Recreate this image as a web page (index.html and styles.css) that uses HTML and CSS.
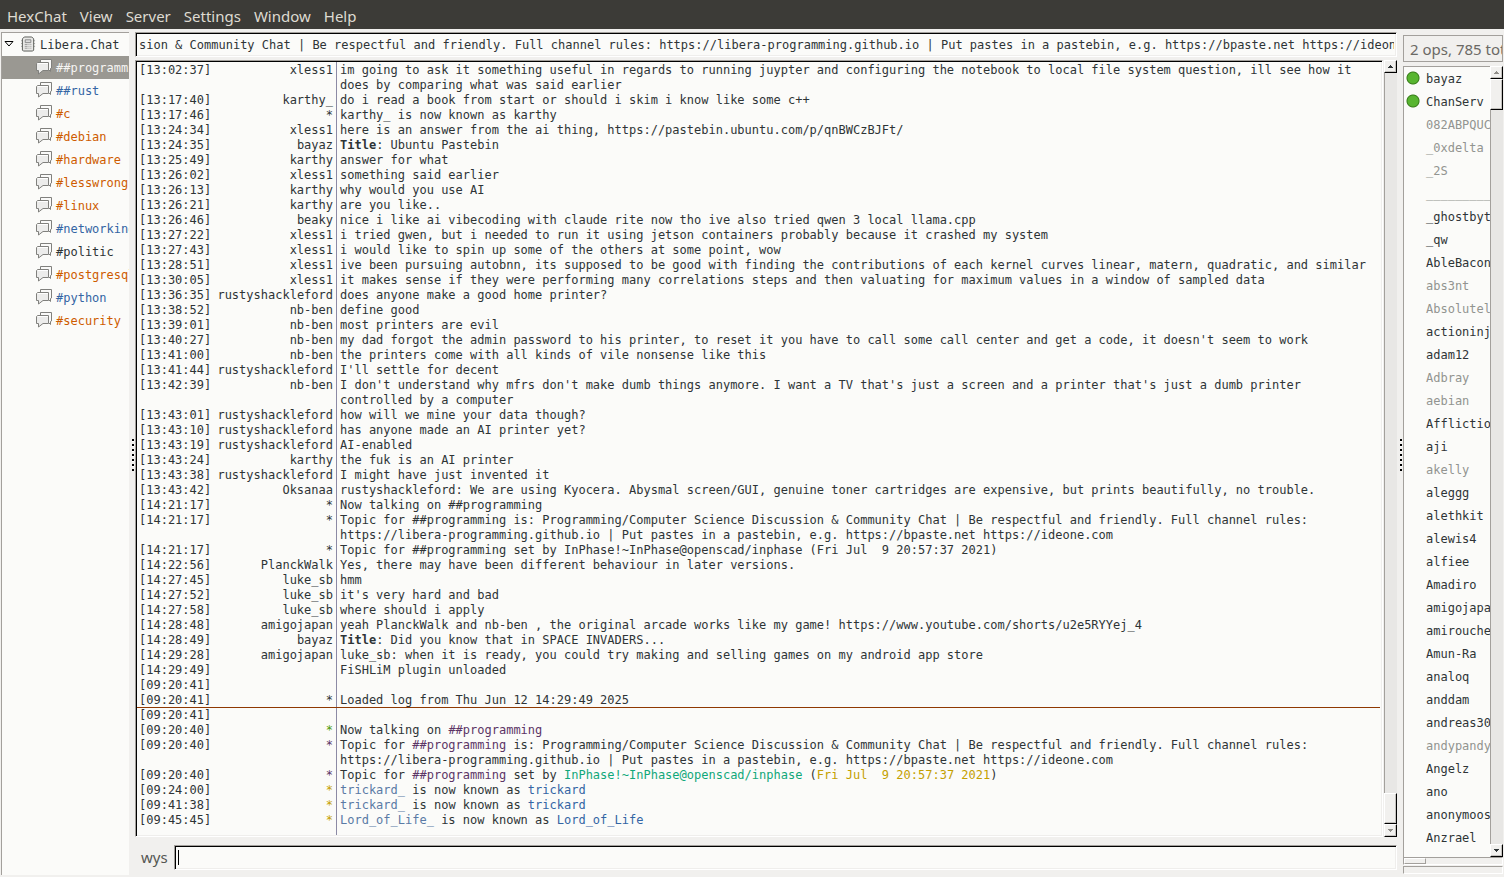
FILE: index.html
```html
<!DOCTYPE html>
<html lang="en">
<head>
<meta charset="utf-8">
<title>HexChat: ##programming</title>
<link rel="stylesheet" href="styles.css">
</head>
<body>
<svg class="defs" aria-hidden="true">
<symbol id="chat" viewBox="0 0 16 16"><path d="M4.500 3.500V.5h11v8.500l-1 .5v3l-2-2H4.500z" fill="#fafaf9" stroke="#80807d"/><path d="M1.500 3.500h11v8H7l-4.500 3.500v-3.500h-2v-7z" fill="#ececeb" stroke="#80807d"/><path d="M2 4.500h10" stroke="#fff"/></symbol>
<symbol id="server" viewBox="0 0 16 16"><path d="M0 4.500h2M0 7.500h2M0 10.500h2M13 4.500h2M13 7.500h2M13 10.500h2" stroke="#aaa"/><path d="M3.500.5h8l2 2v12l-1 1h-10l-1-1v-12z" fill="#e8e8e6" stroke="#555753"/><path d="M4.500 3.500h6v3h-6z" fill="#ddd" stroke="#888"/><path d="M4 8.500h3M4 10.500h3M4 12.500h3M8 8.500h1M10 8.500h1M8 10.500h1M10 10.500h1M8 12.500h1M10 12.500h1" stroke="#999"/></symbol>
<symbol id="up" viewBox="0 0 5 3"><path d="M2 0h1v1h1v1h1v1H0V2h1V1h1z" fill="currentColor"/></symbol>
<symbol id="down" viewBox="0 0 5 3"><path d="M0 0h5v1H4v1H3v1H2V2H1V1H0z" fill="currentColor"/></symbol>
</svg>
<nav class="menubar">
<button>HexChat</button><button>View</button><button>Server</button><button>Settings</button><button>Window</button><button>Help</button>
</nav>
<div class="window">
<aside class="tree">
<button class="row root"><svg class="arrow" viewBox="0 0 10 6"><path d="M1 .5h8L5 5z" fill="none" stroke="#000"/></svg><svg class="icon"><use href="#server"/></svg><span>Libera.Chat</span></button>
<button class="row selected"><svg class="icon"><use href="#chat"/></svg><span>##programming</span></button>
<button class="row talk"><svg class="icon"><use href="#chat"/></svg><span>##rust</span></button>
<button class="row event"><svg class="icon"><use href="#chat"/></svg><span>#c</span></button>
<button class="row event"><svg class="icon"><use href="#chat"/></svg><span>#debian</span></button>
<button class="row event"><svg class="icon"><use href="#chat"/></svg><span>#hardware</span></button>
<button class="row event"><svg class="icon"><use href="#chat"/></svg><span>#lesswrong</span></button>
<button class="row event"><svg class="icon"><use href="#chat"/></svg><span>#linux</span></button>
<button class="row talk"><svg class="icon"><use href="#chat"/></svg><span>#networking</span></button>
<button class="row"><svg class="icon"><use href="#chat"/></svg><span>#politic</span></button>
<button class="row event"><svg class="icon"><use href="#chat"/></svg><span>#postgresql</span></button>
<button class="row talk"><svg class="icon"><use href="#chat"/></svg><span>#python</span></button>
<button class="row event"><svg class="icon"><use href="#chat"/></svg><span>#security</span></button>
</aside>
<div class="grip"><i></i></div>
<main class="center">
<input class="field topic" aria-label="Topic" value="sion &amp; Community Chat | Be respectful and friendly. Full channel rules: https://libera-programming.github.io | Put pastes in a pastebin, e.g. https://bpaste.net https://ideone.com">
<div class="chat">
<div class="log">
<table>
<colgroup><col class="c-time"><col class="c-nick"><col></colgroup>
<tbody>
<tr><td>[13:02:37]</td><td>xless1</td><td>im going to ask it something useful in regards to running juypter and configuring the notebook to local file system question, ill see how it does by comparing what was said earlier</td></tr>
<tr><td>[13:17:40]</td><td>karthy_</td><td>do i read a book from start or should i skim i know like some c++</td></tr>
<tr><td>[13:17:46]</td><td>*</td><td>karthy_ is now known as karthy</td></tr>
<tr><td>[13:24:34]</td><td>xless1</td><td>here is an answer from the ai thing, https://pastebin.ubuntu.com/p/qnBWCzBJFt/</td></tr>
<tr><td>[13:24:35]</td><td>bayaz</td><td><b>Title</b>: Ubuntu Pastebin</td></tr>
<tr><td>[13:25:49]</td><td>karthy</td><td>answer for what</td></tr>
<tr><td>[13:26:02]</td><td>xless1</td><td>something said earlier</td></tr>
<tr><td>[13:26:13]</td><td>karthy</td><td>why would you use AI</td></tr>
<tr><td>[13:26:21]</td><td>karthy</td><td>are you like..</td></tr>
<tr><td>[13:26:46]</td><td>beaky</td><td>nice i like ai vibecoding with claude rite now tho ive also tried qwen 3 local llama.cpp</td></tr>
<tr><td>[13:27:22]</td><td>xless1</td><td>i tried gwen, but i needed to run it using jetson containers probably because it crashed my system</td></tr>
<tr><td>[13:27:43]</td><td>xless1</td><td>i would like to spin up some of the others at some point, wow</td></tr>
<tr><td>[13:28:51]</td><td>xless1</td><td>ive been pursuing autobnn, its supposed to be good with finding the contributions of each kernel curves linear, matern, quadratic, and similar</td></tr>
<tr><td>[13:30:05]</td><td>xless1</td><td>it makes sense if they were performing many correlations steps and then valuating for maximum values in a window of sampled data</td></tr>
<tr><td>[13:36:35]</td><td>rustyshackleford</td><td>does anyone make a good home printer?</td></tr>
<tr><td>[13:38:52]</td><td>nb-ben</td><td>define good</td></tr>
<tr><td>[13:39:01]</td><td>nb-ben</td><td>most printers are evil</td></tr>
<tr><td>[13:40:27]</td><td>nb-ben</td><td>my dad forgot the admin password to his printer, to reset it you have to call some call center and get a code, it doesn't seem to work</td></tr>
<tr><td>[13:41:00]</td><td>nb-ben</td><td>the printers come with all kinds of vile nonsense like this</td></tr>
<tr><td>[13:41:44]</td><td>rustyshackleford</td><td>I'll settle for decent</td></tr>
<tr><td>[13:42:39]</td><td>nb-ben</td><td>I don't understand why mfrs don't make dumb things anymore. I want a TV that's just a screen and a printer that's just a dumb printer controlled by a computer</td></tr>
<tr><td>[13:43:01]</td><td>rustyshackleford</td><td>how will we mine your data though?</td></tr>
<tr><td>[13:43:10]</td><td>rustyshackleford</td><td>has anyone made an AI printer yet?</td></tr>
<tr><td>[13:43:19]</td><td>rustyshackleford</td><td>AI-enabled</td></tr>
<tr><td>[13:43:24]</td><td>karthy</td><td>the fuk is an AI printer</td></tr>
<tr><td>[13:43:38]</td><td>rustyshackleford</td><td>I might have just invented it</td></tr>
<tr><td>[13:43:42]</td><td>Oksanaa</td><td>rustyshackleford: We are using Kyocera. Abysmal screen/GUI, genuine toner cartridges are expensive, but prints beautifully, no trouble.</td></tr>
<tr><td>[14:21:17]</td><td>*</td><td>Now talking on ##programming</td></tr>
<tr><td>[14:21:17]</td><td>*</td><td>Topic for ##programming is: Programming/Computer Science Discussion &amp; Community Chat | Be respectful and friendly. Full channel rules:<br>https://libera-programming.github.io | Put pastes in a pastebin, e.g. https://bpaste.net https://ideone.com</td></tr>
<tr><td>[14:21:17]</td><td>*</td><td>Topic for ##programming set by InPhase!~InPhase@openscad/inphase (Fri Jul  9 20:57:37 2021)</td></tr>
<tr><td>[14:22:56]</td><td>PlanckWalk</td><td>Yes, there may have been different behaviour in later versions.</td></tr>
<tr><td>[14:27:45]</td><td>luke_sb</td><td>hmm</td></tr>
<tr><td>[14:27:52]</td><td>luke_sb</td><td>it's very hard and bad</td></tr>
<tr><td>[14:27:58]</td><td>luke_sb</td><td>where should i apply</td></tr>
<tr><td>[14:28:48]</td><td>amigojapan</td><td>yeah PlanckWalk and nb-ben , the original arcade works like my game! https://www.youtube.com/shorts/u2e5RYYej_4</td></tr>
<tr><td>[14:28:49]</td><td>bayaz</td><td><b>Title</b>: Did you know that in SPACE INVADERS...</td></tr>
<tr><td>[14:29:28]</td><td>amigojapan</td><td>luke_sb: when it is ready, you could try making and selling games on my android app store</td></tr>
<tr><td>[14:29:49]</td><td></td><td>FiSHLiM plugin unloaded</td></tr>
<tr><td>[09:20:41]</td><td></td><td></td></tr>
<tr class="marker"><td>[09:20:41]</td><td>*</td><td>Loaded log from Thu Jun 12 14:29:49 2025</td></tr>
<tr><td>[09:20:41]</td><td></td><td></td></tr>
<tr><td>[09:20:40]</td><td class="green">*</td><td>Now talking on <span class="purple">##programming</span></td></tr>
<tr><td>[09:20:40]</td><td class="purple">*</td><td>Topic for <span class="purple">##programming</span> is: Programming/Computer Science Discussion &amp; Community Chat | Be respectful and friendly. Full channel rules:<br>https://libera-programming.github.io | Put pastes in a pastebin, e.g. https://bpaste.net https://ideone.com</td></tr>
<tr><td>[09:20:40]</td><td class="purple">*</td><td>Topic for <span class="purple">##programming</span> set by <span class="teal">InPhase!~InPhase@openscad/inphase</span> (<span class="gold">Fri Jul  9 20:57:37 2021</span>)</td></tr>
<tr><td>[09:24:00]</td><td class="gold">*</td><td><span class="steel">trickard_</span> is now known as <span class="blue">trickard</span></td></tr>
<tr><td>[09:41:38]</td><td class="gold">*</td><td><span class="steel">trickard_</span> is now known as <span class="blue">trickard</span></td></tr>
<tr><td>[09:45:45]</td><td class="gold">*</td><td><span class="steel">Lord_of_Life_</span> is now known as <span class="blue">Lord_of_Life</span></td></tr>
</tbody>
</table>
</div>
<div class="scroll">
<button class="step" aria-label="Scroll up"><svg><use href="#up"/></svg></button>
<div class="track"></div>
<div class="thumb"></div>
<button class="step off" aria-label="Scroll down"><svg><use href="#down"/></svg></button>
</div>
</div>
<div class="entry"><label for="msg">wys</label><input class="field" id="msg"></div>
</main>
<div class="grip"><i></i></div>
<aside class="users">
<div class="count">2 ops, 785 total</div>
<div class="userbox">
<ul class="list">
<li class="op">bayaz</li><li class="op">ChanServ</li><li class="away">082ABPQUC</li><li class="away">_0xdelta</li><li class="away">_2S</li><li class="away">__________</li><li>_ghostbyte</li><li>_qw</li><li>AbleBacon</li><li class="away">abs3nt</li><li class="away">Absolutely</li><li>actioninja</li><li>adam12</li><li class="away">Adbray</li><li class="away">aebian</li><li>Affliction</li><li>aji</li><li class="away">akelly</li><li>aleggg</li><li>alethkit</li><li>alewis4</li><li>alfiee</li><li>Amadiro</li><li>amigojapan</li><li>amirouche</li><li>Amun-Ra</li><li>analoq</li><li>anddam</li><li>andreas303</li><li class="away">andypandy</li><li>Angelz</li><li>ano</li><li>anonymoose</li><li>Anzrael</li>
</ul>
<div class="scroll">
<button class="step off" aria-label="Scroll users up"><svg><use href="#up"/></svg></button>
<div class="thumb"></div>
<div class="track"></div>
<button class="step" aria-label="Scroll users down"><svg><use href="#down"/></svg></button>
</div>
</div>
<div class="meter"><i></i></div>
<div class="meter"></div>
</aside>
</div>
</body>
</html>
```
FILE: styles.css
```css
* { box-sizing: border-box; }
body {
  margin: 0;
  height: 100vh;
  display: flex;
  flex-direction: column;
  overflow: hidden;
  background: #f1f0ee;
  color: #2e3436;
  font: 12px/15px "DejaVu Sans Mono", monospace;
}
button, input { font: inherit; color: inherit; border: 0; border-radius: 0; padding: 0; margin: 0; background: none; }
.defs { display: none; }

.menubar {
  flex: none;
  display: flex;
  gap: 13px;
  height: 29px;
  padding: 2px 7px 0;
  background: #3c3b37;
  color: #dfdbd2;
  font: 15px/26px "Noto Sans", sans-serif;
}

.window { flex: 1; min-height: 0; display: flex; padding-top: 3px; }

.tree {
  flex: none;
  width: 128px;
  margin: 0 0 2px 1px;
  border: 1px solid #a3a09c;
  border-right: 0;
  border-bottom: 0;
  background: #fbfbf9;
  overflow: hidden;
}
.row { display: flex; align-items: flex-start; gap: 4px; width: 100%; height: 23px; padding: 3px 0 0 34px; white-space: nowrap; text-align: left; overflow: hidden; }
.row span { line-height: 18px; }
.row.root { padding-left: 2px; }
.icon { flex: none; width: 16px; height: 16px; }
.root .arrow { flex: none; width: 10px; height: 6px; margin: 5px 3px 0 0; }
.root .icon { width: 15px; }
.row.selected { background: #9a9892; color: #f6f5f3; }
.talk { color: #3465a4; }
.event { color: #ce5c00; }

.grip { flex: none; width: 6px; display: flex; align-items: center; justify-content: flex-end; padding-right: 1px; }
.grip i { width: 2px; height: 32px; background: repeating-linear-gradient(#000 0 2px, #fff 2px 3px, #f1f0ee 3px 5px); }

.center { flex: 1; min-width: 0; display: flex; flex-direction: column; }
.field {
  height: 25px;
  min-width: 0;
  padding: 0 2px;
  border: 1px solid #a3a09c;
  border-right-color: #fff;
  border-bottom-color: #fff;
  box-shadow: inset 1px 1px #000, inset -1px -1px #efeeec;
  background: #fbfbf9;
  outline: 0;
}
.topic { flex: none; width: 100%; padding-left: 3px; }
.chat { flex: 1; min-height: 0; display: flex; gap: 1px; margin: 3px 0 8px; }
.log {
  flex: 1;
  min-width: 0;
  padding: 2px 2px 0 1px;
  border: 1px solid #a3a09c;
  border-right-color: #fff;
  border-bottom-color: #fff;
  box-shadow: inset 1px 1px #000, inset -1px -1px #efeeec;
  background: linear-gradient(#8c8aa5, #8c8aa5) 200px 1px / 1px 100% no-repeat #fbfbf9;
  overflow: hidden;
}
table { width: 100%; table-layout: fixed; border-collapse: collapse; }
.c-time { width: 76px; }
.c-nick { width: 120px; }
td { padding: 0; vertical-align: top; white-space: pre-wrap; height: 15px; }
td:first-child { padding-left: 2px; }
td:nth-child(2) { text-align: right; }
td:nth-child(3) { padding-left: 7px; }
.marker { background: linear-gradient(#8f3902, #8f3902) 0 100% / 100% 1px no-repeat; }
.green { color: #4e9a06; }
.purple { color: #5c3566; }
.teal { color: #11a879; }
.gold { color: #c4a000; }
.steel { color: #5a7aa5; }
.blue { color: #3465a4; }

.scroll { flex: none; width: 13px; display: flex; flex-direction: column; background: #e8e7e5; }
.track { flex: 1; border-left: 1px solid #a3a09c; }
.step, .thumb {
  flex: none;
  border: 1px solid #fff;
  border-right-color: #000;
  border-bottom-color: #000;
  box-shadow: inset -1px -1px #c4c2be;
  background: #f1f0ee;
}
.step { height: 13px; display: flex; align-items: center; justify-content: center; }
.step svg { width: 5px; height: 3px; }
.off { color: #8f8d88; }
.thumb { height: 31px; }

.entry { flex: none; display: flex; align-items: center; gap: 6px; padding: 0 0 7px 6px; }
.entry label { font: 15px/25px "Noto Sans", sans-serif; color: #555753; }
.entry .field { flex: 1; background: linear-gradient(#000, #000) 3px 4px / 1px 15px no-repeat #fbfbf9; }

.users { flex: none; width: 101px; display: flex; flex-direction: column; padding-top: 3px; }
.count {
  height: 27px;
  margin: 0 1px 4px 0;
  padding-left: 6px;
  border: 1px solid #a3a09c;
  color: #6b6965;
  font: 15px/27px "Noto Sans", sans-serif;
  white-space: nowrap;
  overflow: hidden;
}
.userbox { flex: 1; min-height: 0; display: flex; padding-right: 1px; }
.list { flex: 1; min-width: 0; margin: 0; padding: 0; list-style: none; border: 1px solid #a3a09c; border-right: 0; border-bottom: 0; background: #fbfbf9; overflow: hidden; }
.list li { height: 23px; padding-left: 22px; line-height: 25px; white-space: nowrap; overflow: hidden; }
.list .away { color: #929490; }
.op { background: radial-gradient(circle at 9px 11px, #58b530 5px, #397d1b 6px, transparent 7px); }
.meter { flex: none; height: 8px; margin: 0 1px 1px 0; border: 1px solid #a3a09c; border-right-color: #fff; border-bottom-color: #fff; }
.meter i { display: block; width: 22px; height: 6px; border: 1px solid #fff; border-right-color: #a3a09c; border-bottom-color: #a3a09c; }
.meter:last-child { margin-bottom: 3px; }
```
